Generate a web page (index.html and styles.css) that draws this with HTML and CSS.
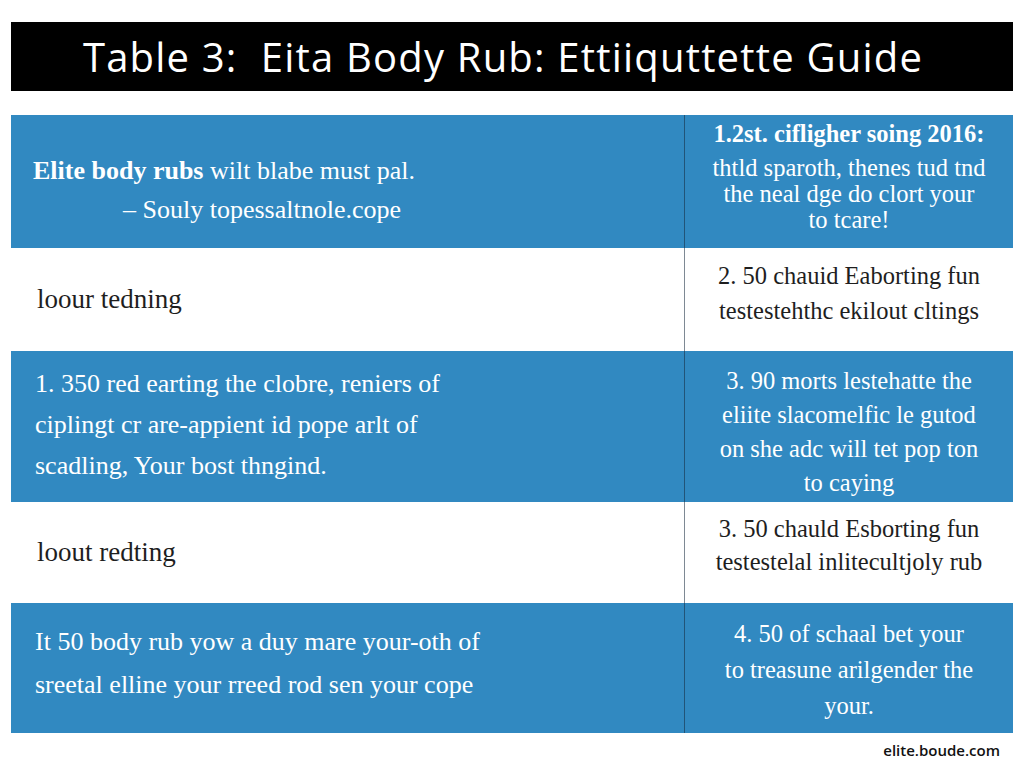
FILE: index.html
```html
<!DOCTYPE html>
<html>
<head>
<meta charset="utf-8">
<link rel="stylesheet" href="styles.css">
</head>
<body>
<div class="page">
  <div class="titlebar"><h1>Table 3:&nbsp; Eita Body Rub: Ettiiquttette Guide</h1></div>
  <div class="table">
    <div class="cell left blue r1">
      <p class="l1"><b>Elite body rubs</b> wilt blabe must pal.</p>
      <p class="l2">– Souly topessaltnole.cope</p>
    </div>
    <div class="cell right blue r1">
      <span class="head">1.2st. cifligher soing 2016:</span>
      <span>thtld sparoth, thenes tud tnd</span>
      <span>the neal dge do clort your</span>
      <span>to tcare!</span>
    </div>

    <div class="cell left white r2">
      <p>loour tedning</p>
    </div>
    <div class="cell right white r2">
      <span>2. 50 chauid Eaborting fun</span>
      <span>testestehthc ekilout cltings</span>
    </div>

    <div class="cell left blue r3">
      <p>1. 350 red earting the clobre, reniers of</p>
      <p>ciplingt cr are-appient id pope arlt of</p>
      <p>scadling, Your bost thngind.</p>
    </div>
    <div class="cell right blue r3">
      <span>3. 90 morts lestehatte the</span>
      <span>eliite slacomelfic le gutod</span>
      <span>on she adc will tet pop ton</span>
      <span>to caying</span>
    </div>

    <div class="cell left white r4">
      <p>loout redting</p>
    </div>
    <div class="cell right white r4">
      <span>3. 50 chauld Esborting fun</span>
      <span>testestelal inlitecultjoly rub</span>
    </div>

    <div class="cell left blue r5">
      <p>It 50 body rub yow a duy mare your-oth of</p>
      <p>sreetal elline your rreed rod sen your cope</p>
    </div>
    <div class="cell right blue r5">
      <span>4. 50 of schaal bet your</span>
      <span>to treasune arilgender the</span>
      <span>your.</span>
    </div>
  </div>
  <div class="footer">elite.boude.com</div>
</div>
</body>
</html>
```

FILE: styles.css
```css
* { box-sizing: border-box; }
html, body { margin: 0; padding: 0; background: #ffffff; }
body { width: 1024px; height: 768px; overflow: hidden; font-family: "Liberation Serif", "Times New Roman", serif; }
.page { padding: 22px 11px 0 11px; }
.titlebar {
  background: #000000;
  height: 69px;
  display: flex;
  align-items: center;
  justify-content: center;
  padding-right: 18px;
}
.titlebar h1 {
  margin: 0;
  color: #ffffff;
  font-family: "Open Sans", "Liberation Sans", sans-serif;
  font-weight: 400;
  font-size: 40px;
  letter-spacing: 1.2px;
  line-height: 1;
}
.table {
  margin-top: 24px;
  display: grid;
  grid-template-columns: 673px 329px;
  grid-template-rows: 133px 103px 151px 101px 130px;
}
.cell { display: flex; flex-direction: column; justify-content: center; }
.blue { background: #3189c1; color: #ffffff; }
.white { background: #ffffff; color: #1e1e1e; }
.left { padding-left: 24px; font-size: 26px; }
.left p { margin: 0; white-space: nowrap; }
.right {
  border-left: 1px solid rgba(20, 40, 60, 0.55);
  align-items: center;
  text-align: center;
  font-size: 24.5px;
}
.right span { display: block; white-space: nowrap; }
.r1.left { padding-top: 16px; padding-left: 22px; }
.r1.left .l1 { line-height: 39px; }
.r1.left .l1 b { font-weight: 700; }
.r1.left .l2 { line-height: 39px; padding-left: 90px; }
.r1.right { line-height: 26px; padding-bottom: 10px; }
.r1.right .head { font-weight: 700; margin-bottom: 8px; }
.r2.right { line-height: 35px; padding-bottom: 14px; }
.r3.left { line-height: 41px; padding-bottom: 4px; padding-left: 24px; }
.r3.right { line-height: 34px; padding-top: 10px; }
.r4.right { line-height: 33px; padding-bottom: 16px; }
.r5.left { line-height: 43px; padding-bottom: 10px; }
.r5.right { line-height: 36px; padding-top: 4px; }
.white.left { padding-left: 26px; font-size: 27px; }
.footer {
  text-align: right;
  padding-right: 13px;
  padding-top: 7px;
  font-family: "Open Sans", "Liberation Sans", sans-serif;
  font-weight: 600;
  font-size: 15px;
  color: #111111;
}
```
